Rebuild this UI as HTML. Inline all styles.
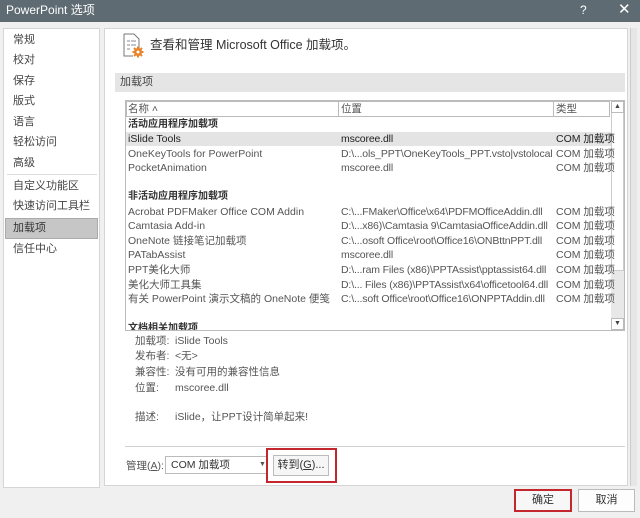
<!DOCTYPE html>
<html><head><meta charset="utf-8"><style>
*{margin:0;padding:0;box-sizing:border-box}
body{width:640px;height:518px;background:#f0f0f0;position:relative;overflow:hidden;font-family:"Liberation Sans","Noto Sans CJK SC",sans-serif;font-size:11px;color:#444;line-height:14px}
.a{position:absolute;white-space:nowrap}
#title{left:0;top:0;width:640px;height:22px;background:#5e6b73;color:#fff;font-size:12px;line-height:20px;padding-left:6px}
.nav{left:3px;top:28px;width:97px;height:460px;background:#fff;border:1px solid #d5d5d5}
.ni{left:13px;font-size:11px;color:#444}
.panel{left:104px;top:28px;width:524px;height:458px;background:#fff;border:1px solid #d5d5d5}
.r{font-size:10.5px;color:#555;line-height:14px;height:14px}
.c1{left:128px}.c2{left:341px;letter-spacing:-0.15px}.c3{left:556px}
.g{color:#333;font-weight:bold;font-size:10px}
</style></head><body>
<div class="a" id="title">PowerPoint 选项</div>
<div class="a" style="left:580px;top:3px;color:#fff;font-size:12px">?</div>
<div class="a" style="left:618px;top:3px;color:#fff;font-size:15px">✕</div>

<div class="a nav"></div>
<div class="a ni" style="top:33px">常规</div>
<div class="a ni" style="top:53px">校对</div>
<div class="a ni" style="top:74px">保存</div>
<div class="a ni" style="top:94px">版式</div>
<div class="a ni" style="top:115px">语言</div>
<div class="a ni" style="top:135px">轻松访问</div>
<div class="a ni" style="top:156px">高级</div>
<div class="a" style="left:7px;top:174px;width:90px;height:1px;background:#ddd"></div>
<div class="a ni" style="top:179px">自定义功能区</div>
<div class="a ni" style="top:199px">快速访问工具栏</div>
<div class="a" style="left:5px;top:218px;width:93px;height:21px;background:#c6c6c6;border:1px solid #aaa"></div>
<div class="a ni" style="top:221px;color:#333">加载项</div>
<div class="a ni" style="top:242px">信任中心</div>

<div class="a panel"></div>
<div class="a" style="left:630px;top:28px;width:7px;height:458px;background:#e6e6e6;border-left:1px solid #ccc"></div>
<svg class="a" style="left:122px;top:33px" width="24" height="26" viewBox="0 0 24 26">
<path d="M2 1h10l5 5v11M2 1v22h9" fill="none" stroke="#777"/>
<path d="M5 8h3M5 12h3M5 16h3M9 8h5M9 12h5" stroke="#889" />
<circle cx="16" cy="19" r="4" fill="#e8832a"/><circle cx="16" cy="19" r="1.5" fill="#fff"/>
<path d="M16 13.5v2M16 22.5v2M10.5 19h2M19.5 19h2M12 15l1.5 1.5M18.5 21.5L20 23M20 15l-1.5 1.5M12 23l1.5-1.5" stroke="#e8832a" stroke-width="2"/>
</svg>
<div class="a" style="left:150px;top:38px;font-size:12.5px;color:#333">查看和管理 Microsoft Office 加载项。</div>
<div class="a" style="left:115px;top:73px;width:510px;height:19px;background:#e5e5e5;color:#444;font-size:11px;line-height:18px;padding-left:5px">加载项</div>

<div class="a" style="left:125px;top:100px;width:500px;height:231px;border:1px solid #bbb;background:#fff"></div>
<div class="a" style="left:126px;top:101px;width:213px;height:16px;border:1px solid #bbb"></div>
<div class="a" style="left:338px;top:101px;width:216px;height:16px;border:1px solid #bbb"></div>
<div class="a" style="left:553px;top:101px;width:57px;height:16px;border:1px solid #bbb"></div>
<div class="a r c1" style="top:102px">名称 ˄</div>
<div class="a r c2" style="top:102px">位置</div>
<div class="a r c3" style="top:102px">类型</div>
<div class="a" style="left:611px;top:101px;width:13px;height:229px;background:#e8e8e8"></div>
<div class="a" style="left:611px;top:101px;width:13px;height:170px;background:#fff;border:1px solid #ccc"></div>
<div class="a" style="left:611px;top:101px;width:13px;height:12px;border:1px solid #bbb;background:#fff;font-size:7px;text-align:center;line-height:10px">▲</div>
<div class="a" style="left:611px;top:318px;width:13px;height:12px;border:1px solid #bbb;background:#fff;font-size:7px;text-align:center;line-height:10px">▼</div>

<div class="a r c1 g" style="top:118px">活动应用程序加载项</div>
<div class="a" style="left:126px;top:132px;width:485px;height:14px;background:#e4e4e4"></div>
<div class="a r c1" style="top:132px;color:#222">iSlide Tools</div><div class="a r c2" style="top:132px;color:#222">mscoree.dll</div><div class="a r c3" style="top:132px;color:#222">COM 加载项</div>
<div class="a r c1" style="top:147px">OneKeyTools for PowerPoint</div><div class="a r c2" style="top:147px">D:\...ols_PPT\OneKeyTools_PPT.vsto|vstolocal</div><div class="a r c3" style="top:147px">COM 加载项</div>
<div class="a r c1" style="top:161px">PocketAnimation</div><div class="a r c2" style="top:161px">mscoree.dll</div><div class="a r c3" style="top:161px">COM 加载项</div>
<div class="a r c1 g" style="top:190px">非活动应用程序加载项</div>
<div class="a r c1" style="top:205px">Acrobat PDFMaker Office COM Addin</div><div class="a r c2" style="top:205px">C:\...FMaker\Office\x64\PDFMOfficeAddin.dll</div><div class="a r c3" style="top:205px">COM 加载项</div>
<div class="a r c1" style="top:219px">Camtasia Add-in</div><div class="a r c2" style="top:219px">D:\...x86)\Camtasia 9\CamtasiaOfficeAddin.dll</div><div class="a r c3" style="top:219px">COM 加载项</div>
<div class="a r c1" style="top:234px">OneNote 链接笔记加载项</div><div class="a r c2" style="top:234px">C:\...osoft Office\root\Office16\ONBttnPPT.dll</div><div class="a r c3" style="top:234px">COM 加载项</div>
<div class="a r c1" style="top:248px">PATabAssist</div><div class="a r c2" style="top:248px">mscoree.dll</div><div class="a r c3" style="top:248px">COM 加载项</div>
<div class="a r c1" style="top:263px">PPT美化大师</div><div class="a r c2" style="top:263px">D:\...ram Files (x86)\PPTAssist\pptassist64.dll</div><div class="a r c3" style="top:263px">COM 加载项</div>
<div class="a r c1" style="top:278px">美化大师工具集</div><div class="a r c2" style="top:278px">D:\... Files (x86)\PPTAssist\x64\officetool64.dll</div><div class="a r c3" style="top:278px">COM 加载项</div>
<div class="a r c1" style="top:292px">有关 PowerPoint 演示文稿的 OneNote 便笺</div><div class="a r c2" style="top:292px">C:\...soft Office\root\Office16\ONPPTAddin.dll</div><div class="a r c3" style="top:292px">COM 加载项</div>
<div class="a" style="left:126px;top:322px;width:485px;height:8px;overflow:hidden"><div class="a r g" style="left:2px;top:0px">文档相关加载项</div></div>

<div class="a r" style="left:135px;top:334px">加载项:</div><div class="a r" style="left:175px;top:334px">iSlide Tools</div>
<div class="a r" style="left:135px;top:349px">发布者:</div><div class="a r" style="left:175px;top:349px">&lt;无&gt;</div>
<div class="a r" style="left:135px;top:365px">兼容性:</div><div class="a r" style="left:175px;top:365px">没有可用的兼容性信息</div>
<div class="a r" style="left:135px;top:381px">位置:</div><div class="a r" style="left:175px;top:381px">mscoree.dll</div>
<div class="a r" style="left:135px;top:410px">描述:</div><div class="a r" style="left:175px;top:410px">iSlide，让PPT设计简单起来!</div>

<div class="a" style="left:125px;top:446px;width:500px;height:1px;background:#d0d0d0"></div>
<div class="a r" style="left:126px;top:459px">管理(<u>A</u>):</div>
<div class="a" style="left:165px;top:456px;width:103px;height:18px;border:1px solid #bbb;background:#fff"></div>
<div class="a r" style="left:171px;top:458px;color:#333">COM 加载项</div>
<div class="a" style="left:259px;top:458px;font-size:7px;color:#555">▼</div>
<div class="a" style="left:266px;top:448px;width:71px;height:35px;border:2px solid #c4262e"></div>
<div class="a" style="left:273px;top:455px;width:56px;height:21px;border:1px solid #bbb;background:#f6f6f6;text-align:center;line-height:19px;color:#333">转到(<u>G</u>)...</div>

<div class="a" style="left:514px;top:489px;width:58px;height:23px;border:2px solid #c4262e;background:#f7f7f7;text-align:center;line-height:19px;color:#333">确定</div>
<div class="a" style="left:578px;top:489px;width:57px;height:23px;border:1px solid #bbb;background:#fdfdfd;text-align:center;line-height:21px;color:#333">取消</div>
</body></html>
